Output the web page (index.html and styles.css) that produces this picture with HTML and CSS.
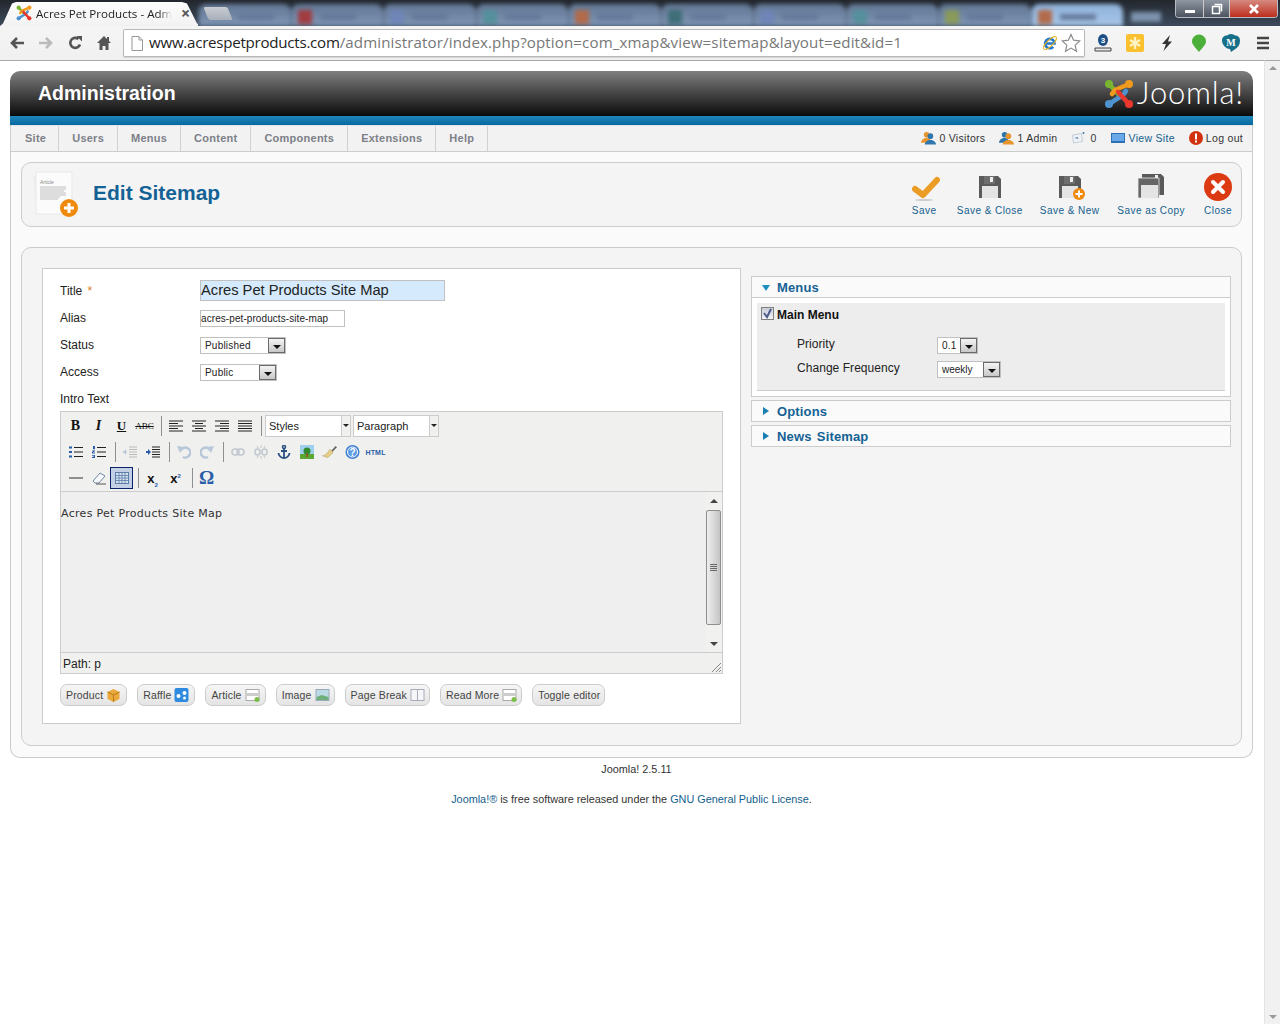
FILE: index.html
```html
<!DOCTYPE html>
<html lang="en">
<head>
<meta charset="utf-8">
<title>Acres Pet Products - Administration</title>
<link rel="stylesheet" href="styles.css">
</head>
<body>
<div class="tabstrip">
  <div class="tab">
    <svg class="favicon" viewBox="0 0 30 30"><g fill="none" stroke-width="4.600" stroke-linecap="round"><path d="M5 5l11 12" stroke="#7ab532"/><path d="M25 5L11 11l-3 4" stroke="#f09a1e"/><path d="M5 25l14-9 3-4" stroke="#4f92d0"/><path d="M25 25L14 13" stroke="#e8382e"/></g><circle cx="5" cy="5" r="4" fill="#7ab532"/><circle cx="25" cy="5" r="4" fill="#f09a1e"/><circle cx="5" cy="25" r="4" fill="#4f92d0"/><circle cx="25" cy="25" r="4" fill="#e8382e"/></svg>
    <span class="tab-title">Acres Pet Products - Adm</span>
    <span class="tab-close">×</span>
  </div>
  <div class="newtab"></div>
  <div class="blurtabs">
    <span class="bt bt-first"><u></u></span><span class="bt"><i class="c1"></i><u></u></span><span class="bt"><i class="c2"></i><u></u></span><span class="bt"><i class="c3"></i><u></u></span><span class="bt"><i class="c4"></i><u></u></span><span class="bt"><i class="c5"></i><u></u></span><span class="bt"><i class="c2"></i><u></u></span><span class="bt"><i class="c3"></i><u></u></span><span class="bt"><i class="c6"></i><u></u></span><span class="bt bt-on"><i class="c4"></i><u></u></span>
    <span class="bt-tail"></span>
  </div>
  <div class="winctl">
    <span class="wbtn wmin"><b></b></span>
    <span class="wbtn wmax"><svg viewBox="0 0 12 12" width="12" height="12"><path d="M3.500 1.500h7v7M1.500 3.500h7v7h-7z" fill="none" stroke="#fff" stroke-width="1.500"/></svg></span>
    <span class="wbtn wclose"><svg viewBox="0 0 12 12" width="12" height="12"><path d="M2 2l8 8M10 2l-8 8" stroke="#fff" stroke-width="2.600"/></svg></span>
  </div>
</div>
<div class="toolbar">
  <svg class="nav" viewBox="0 0 16 16"><path d="M15 8H4M8 3L3 8l5 5" fill="none" stroke="#555" stroke-width="2.600"/></svg>
  <svg class="nav" viewBox="0 0 16 16"><path d="M1 8h11M8 3l5 5-5 5" fill="none" stroke="#bbb" stroke-width="2.600"/></svg>
  <svg class="nav" viewBox="0 0 16 16"><path d="M13 9.500A5 5 0 1 1 11.500 4" fill="none" stroke="#555" stroke-width="2.600"/><path d="M9.500 1h5.500v5.500z" fill="#555"/></svg>
  <svg class="nav" viewBox="0 0 16 16"><path d="M8 1L1 8h2.500v7h3v-4h3v4h3V8H15l-2-2V2h-2v2z" fill="#555"/></svg>
  <div class="omnibox">
    <svg class="pageicon" viewBox="0 0 12 15"><path d="M1 .5h7l3.500 3.500v10.500H1zM8 .5V4h3.500" fill="#fff" stroke="#999"/></svg>
    <span class="url"><span class="host">www.acrespetproducts.com</span>/administrator/index.php?option=com_xmap&amp;view=sitemap&amp;layout=edit&amp;id=1</span>
    <svg class="ie" viewBox="0 0 16 16"><path d="M3.500 8.500h9a4.700 4.700 0 1 0-1.300 3.300" fill="none" stroke="#2277cc" stroke-width="2.600"/><ellipse cx="8" cy="8" rx="8.500" ry="3" transform="rotate(-45 8 8)" fill="none" stroke="#e6b422" stroke-width="1"/></svg>
    <svg class="star" viewBox="0 0 20 20"><path d="M10 1.500l2.600 5.700 6.200.7-4.600 4.200 1.300 6.100L10 15.100l-5.500 3.100 1.300-6.100L1.200 7.900l6.200-.7z" fill="#fff" stroke="#8a8a8a" stroke-width="1.200"/></svg>
  </div>
  <div class="exts">
    <svg viewBox="0 0 18 18"><ellipse cx="9" cy="6" rx="5" ry="6" fill="#1c4f86"/><text x="9" y="9" class="ext-3">3</text><path d="M1 14h16v3H1z" fill="#e8e8e8" stroke="#444"/></svg>
    <svg viewBox="0 0 18 18"><rect x="0" y="0" width="18" height="18" rx="2" fill="#fbc02d"/><path d="M9 3v12M4 6l10 6M14 6L4 12" stroke="#fff3c4" stroke-width="2.400"/></svg>
    <svg viewBox="0 0 18 18"><path d="M12 1L4 10h4l-2.500 7L14 7.500H10z" fill="#333"/></svg>
    <svg viewBox="0 0 18 18"><path d="M9 18C5 13 2 10.500 2 7.500a7 7 0 0 1 14 0C16 10.500 13 13 9 18z" fill="#4caf3a"/></svg>
    <svg viewBox="0 0 18 18"><path d="M9 0c2 0 3 1 4 1.500 3 0 5 2 5 5s-1 6-4 8L9 18l-1-3C3 14.500 0 10 0 6.500 0 3.500 2 1.500 5 1.500 6 1 7 0 9 0z" fill="#17708a"/><text x="9" y="12" class="ext-m">M</text></svg>
    <svg viewBox="0 0 18 18"><path d="M3 4h12M3 9h12M3 14h12" stroke="#444" stroke-width="2.400"/></svg>
  </div>
</div>
<div class="viewport">
  <div class="page">
    <header class="banner">
      <h1 class="brand">Administration</h1>
      <div class="jlogo">
        <svg class="jmark" viewBox="0 0 30 30"><g fill="none" stroke-width="4.600" stroke-linecap="round"><path d="M5 5l11 12" stroke="#7ab532"/><path d="M25 5L11 11l-3 4" stroke="#f09a1e"/><path d="M5 25l14-9 3-4" stroke="#4f92d0"/><path d="M25 25L14 13" stroke="#e8382e"/></g><circle cx="5" cy="5" r="4" fill="#7ab532"/><circle cx="25" cy="5" r="4" fill="#f09a1e"/><circle cx="5" cy="25" r="4" fill="#4f92d0"/><circle cx="25" cy="25" r="4" fill="#e8382e"/></svg>
        <span class="jtext">Joomla!</span>
      </div>
    </header>
    <div class="bluebar"></div>
    <div class="shell">
      <nav class="menubar">
        <ul class="menu">
          <li>Site</li><li>Users</li><li>Menus</li><li>Content</li><li>Components</li><li>Extensions</li><li>Help</li>
        </ul>
        <div class="status">
          <span class="st"><svg viewBox="0 0 16 14"><circle cx="6" cy="3.500" r="3" fill="#e8962c"/><path d="M0 12c0-3 3-5 6-5s5 2 5 5z" fill="#e8962c"/><circle cx="10" cy="5" r="3" fill="#2f76ad"/><path d="M4 14c0-3 3-5 6-5s6 2 6 5z" fill="#2f76ad"/></svg>0 Visitors</span>
          <span class="st"><svg viewBox="0 0 16 14"><circle cx="6" cy="3.500" r="3" fill="#2f76ad"/><path d="M0 12c0-3 3-5 6-5s5 2 5 5z" fill="#2f76ad"/><circle cx="10" cy="5" r="3" fill="#e8962c"/><path d="M4 14c0-3 3-5 6-5s6 2 6 5z" fill="#e8962c"/></svg>1 Admin</span>
          <span class="st st-env"><svg viewBox="0 0 14 14"><path d="M1 4l9-1.500 1 8L2 12z" fill="#eef2f6" stroke="#b8c4d0" stroke-width=".8"/><path d="M3 7l3-1 1 2z" fill="#4b7fa8"/><circle cx="12" cy="2" r="1" fill="#4b7fa8"/></svg>0</span>
          <span class="st st-link"><svg class="wide" viewBox="0 0 14 10"><rect width="14" height="10" fill="#2f6fb5"/><rect x="1" y="1" width="12" height="7" fill="#6aa9e8"/></svg>View Site</span>
          <span class="st st-last"><svg viewBox="0 0 14 14"><circle cx="7" cy="7" r="7" fill="#d2300e"/><rect x="6" y="2.500" width="2" height="6" fill="#fff"/><rect x="6" y="9.500" width="2" height="2" fill="#fff"/></svg>Log out</span>
        </div>
      </nav>
      <section class="titlebox">
        <svg class="titleicon" viewBox="0 0 48 48">
          <path d="M1 5l30-2 2 38-28 1z" fill="#ededed"/>
          <rect x="4" y="1" width="36" height="42" fill="#fbfbfb" stroke="#e9e9e9"/>
          <text x="8" y="13" class="art-label">Article</text>
          <path d="M8 16h26M8 18h26M8 20h24M8 22h26M8 24h26M8 26h20M8 28h18" stroke="#a8a8a8" stroke-width=".7"/>
          <circle cx="37" cy="37" r="9" fill="#f08a0c"/>
          <path d="M37 32v10M32 37h10" stroke="#fff" stroke-width="3"/>
        </svg>
        <h2 class="pagetitle">Edit Sitemap</h2>
        <div class="actions">
          <div class="act act-save"><svg viewBox="1 0 28 28"><path d="M4 16l8 6L26 7" fill="none" stroke="#eb9c25" stroke-width="6" stroke-linecap="round" stroke-linejoin="round"/><ellipse cx="13" cy="27" rx="9" ry="1" fill="#ccc"/></svg><span>Save</span></div>
          <div class="act"><svg viewBox="0 0 30 28"><path d="M4 3h19l3 3v19H4z" fill="#5a5a5a"/><rect x="9" y="3" width="11" height="8" fill="#6e6e6e"/><rect x="15" y="4" width="3" height="5" fill="#eee"/><rect x="7" y="13" width="16" height="12" fill="#e4e4e4"/></svg><span>Save &amp; Close</span></div>
          <div class="act"><svg viewBox="0 0 30 28"><path d="M4 3h19l3 3v19H4z" fill="#5a5a5a"/><rect x="9" y="3" width="11" height="8" fill="#6e6e6e"/><rect x="15" y="4" width="3" height="5" fill="#eee"/><rect x="7" y="13" width="16" height="12" fill="#e4e4e4"/><circle cx="24" cy="21" r="6" fill="#f08a0c"/><path d="M24 17.500v7M20.500 21h7" stroke="#fff" stroke-width="2"/></svg><span>Save &amp; New</span></div>
          <div class="act act-copy"><svg viewBox="0 0 30 28"><path d="M6 1h19l3 3v18H6z" fill="#5a5a5a"/><path d="M2 5h21v20H2z" fill="#666" stroke="#eee" stroke-width=".8"/><rect x="19" y="2" width="3" height="3" fill="#eee"/><rect x="5" y="12" width="17" height="13" fill="#e4e4e4"/></svg><span>Save as Copy</span></div>
          <div class="act act-close"><svg viewBox="1 0 28 28"><circle cx="15" cy="14" r="14" fill="#dc3a12"/><path d="M10 9l10 10M20 9L10 19" stroke="#fff" stroke-width="4" stroke-linecap="round"/></svg><span>Close</span></div>
        </div>
      </section>
      <section class="contentbox">
        <form class="formpanel">
          <div class="row row-title"><label class="lbl">Title <em>*</em></label><span class="in in-title">Acres Pet Products Site Map</span></div>
          <div class="row"><label class="lbl">Alias</label><span class="in in-alias">acres-pet-products-site-map</span></div>
          <div class="row"><label class="lbl">Status</label><span class="sel sel-status">Published<b class="arrow"></b></span></div>
          <div class="row"><label class="lbl">Access</label><span class="sel sel-access">Public<b class="arrow"></b></span></div>
          <div class="row row-intro"><label class="lbl">Intro Text</label></div>
          <div class="editor">
            <div class="edtools">
              <div class="edrow">
                <span class="eb t-b">B</span><span class="eb t-i">I</span><span class="eb t-u">U</span><span class="eb t-s">ABC</span><i class="sep"></i>
                <span class="eb"><svg viewBox="0 0 14 12"><path d="M0 1h14M0 3.500h9M0 6h14M0 8.500h9M0 11h14"/></svg></span>
                <span class="eb"><svg viewBox="0 0 14 12"><path d="M0 1h14M3 3.500h8M0 6h14M3 8.500h8M0 11h14"/></svg></span>
                <span class="eb"><svg viewBox="0 0 14 12"><path d="M0 1h14M5 3.500h9M0 6h14M5 8.500h9M0 11h14"/></svg></span>
                <span class="eb"><svg viewBox="0 0 14 12"><path d="M0 1h14M0 3.500h14M0 6h14M0 8.500h14M0 11h14"/></svg></span><i class="sep"></i>
                <span class="ddl ddl-1"><span>Styles</span><b></b></span><span class="ddl ddl-2"><span>Paragraph</span><b></b></span>
              </div>
              <div class="edrow">
                <span class="eb"><svg viewBox="0 0 14 12"><path d="M5 1.500h9M5 6h9M5 10.500h9"/><path d="M0 .5h3v2H0zM0 5h3v2H0zM0 9.500h3v2H0z" class="bl"/></svg></span>
                <span class="eb"><svg viewBox="0 0 14 12"><path d="M5 1.500h9M5 6h9M5 10.500h9"/><path d="M1 0h2v3.200H1zM0 4.500h3v1H1v1h2v1H0v-1.500h2v-.5H0zM0 9h3v3H0v-1h2v-.4H1v-.6h1v-.2H0z" class="bl"/></svg></span><i class="sep"></i>
                <span class="eb"><svg class="off" viewBox="0 0 14 12"><path d="M6 1h8M6 3.500h8M6 6h8M6 8.500h8M6 11h8M0 6h4"/><path d="M0 6l3-3v6z" class="bl-f"/></svg></span>
                <span class="eb"><svg viewBox="0 0 14 12"><path d="M6 1h8M6 3.500h8M6 6h8M6 8.500h8M6 11h8"/><path d="M0 5h2V3l3 3-3 3V7H0z" class="bl"/></svg></span><i class="sep"></i>
                <span class="eb"><svg class="faint" viewBox="0 0 14 14"><path d="M4 5a5 5 0 1 1 2 7" fill="none" stroke-width="2.500"/><path d="M0 1l7 1-4 6z" class="bl-f"/></svg></span>
                <span class="eb"><svg class="faint" viewBox="0 0 14 14"><path d="M10 5a5 5 0 1 0-2 7" fill="none" stroke-width="2.500"/><path d="M14 1L7 2l4 6z" class="bl-f"/></svg></span><i class="sep"></i>
                <span class="eb"><svg class="grey" viewBox="0 0 14 10"><rect x="1" y="2" width="7" height="6" rx="3" fill="none" stroke-width="1.500"/><rect x="6" y="2" width="7" height="6" rx="3" fill="none" stroke-width="1.500"/></svg></span>
                <span class="eb"><svg class="grey big" viewBox="0 0 14 14"><rect x="1" y="4" width="5" height="6" rx="2.500" fill="none" stroke-width="1.500"/><rect x="8" y="4" width="5" height="6" rx="2.500" fill="none" stroke-width="1.500"/><path d="M7 0v3M7 11v3M3 1l1 2M11 1l-1 2M3 13l1-2M11 13l-1-2" stroke-width="1"/></svg></span>
                <span class="eb"><svg class="anchor big" viewBox="0 0 14 14"><circle cx="7" cy="2" r="1.500" fill="none" stroke-width="1.500"/><path d="M7 3.500V13M4 6h6M1.500 8c0 3 3 5 5.500 5s5.500-2 5.500-5" fill="none" stroke-width="1.800"/></svg></span>
                <span class="eb"><svg class="big" viewBox="0 0 14 14"><rect width="14" height="14" fill="#9ed0ee" stroke="none"/><rect y="9" width="14" height="5" fill="#5aa832" stroke="none"/><circle cx="7" cy="6" r="3.500" fill="#2f8a2f" stroke="none"/><rect x="6" y="8" width="2" height="4" fill="#8a5a2a" stroke="none"/></svg></span>
                <span class="eb"><svg class="big wide15" viewBox="0 0 16 14"><path d="M10 5.500l4.500-5 1.500 1.500-5 5z" fill="#666" stroke="none"/><path d="M8.500 4l3.500 3.500L6 13 .5 11c3.500 0 5.500-3.500 8-7z" fill="#e6cf85" stroke="#a89355" stroke-width=".5"/></svg></span>
                <span class="eb"><svg class="big wide15" viewBox="0 0 14 14"><circle cx="7" cy="7" r="7" fill="#3f7fd0" stroke="none"/><circle cx="7" cy="7" r="5" fill="#5a9ae6" stroke="#fff"/><text x="7" y="10.500" class="qm">?</text></svg></span>
                <span class="eb eb-html">HTML</span>
              </div>
              <div class="edrow">
                <span class="eb"><svg viewBox="0 0 16 4"><path d="M0 2h16" stroke="#111"/></svg></span>
                <span class="eb"><svg class="big" viewBox="0 0 14 14"><path d="M1 10l7-8 5 3-6 7H3z" fill="#f6f8fb" stroke="#7289a8"/><path d="M4 13h10" stroke="#555"/></svg></span>
                <span class="eb eb-on"><svg viewBox="0 0 14 12"><rect x=".5" y=".5" width="13" height="11" fill="#d7e2f0" stroke="#5c7ea8"/><path d="M.5 3.500h13M.5 6h13M.5 8.500h13M4 .5v11M7 .5v11M10 .5v11" stroke="#5c7ea8" stroke-width=".8"/></svg></span><i class="sep"></i>
                <span class="eb t-x"><span>x<sub>2</sub></span></span>
                <span class="eb t-x"><span>x<sup>2</sup></span></span><i class="sep"></i>
                <span class="eb t-o">Ω</span>
              </div>
            </div>
            <div class="edbody">
              <div class="edtext">Acres Pet Products Site Map</div>
              <div class="edscroll">
                <b class="sb-up"></b>
                <div class="thumb"><i></i><i></i><i></i><i></i></div>
                <b class="sb-dn"></b>
              </div>
            </div>
            <div class="edpath">Path: p
              <svg class="grip" viewBox="0 0 11 11"><path d="M10 1L1 10M10 5l-5 5M10 8l-2 2" stroke="#888"/></svg>
            </div>
          </div>
          <div class="xbuttons">
            <span class="xb">Product<svg viewBox="0 0 14 14"><path d="M7 1l6 3v7l-6 3-6-3V4z" fill="#eaa93a"/><path d="M1 4l6 3 6-3M7 7v7" fill="none" stroke="#b97a18"/></svg></span>
            <span class="xb">Raffle<svg viewBox="0 0 14 14"><rect width="14" height="14" rx="2" fill="#2e8be0"/><circle cx="4" cy="8" r="2" fill="#fff"/><circle cx="10" cy="5" r="2" fill="#fff"/><circle cx="10" cy="10" r="1.500" fill="#fff"/></svg></span>
            <span class="xb">Article<svg viewBox="0 0 14 14"><rect x=".5" y="1.500" width="13" height="11" fill="#fff" stroke="#aaa"/><path d="M1 6.500h12" stroke="#ccc" stroke-width="3"/><circle cx="11.500" cy="11.500" r="2.500" fill="#7cc04a"/></svg></span>
            <span class="xb">Image<svg viewBox="0 0 14 14"><rect x=".5" y="1.500" width="13" height="11" fill="#bcd9e6" stroke="#9ab"/><path d="M1 9l5-2 7 2v3H1z" fill="#6fb07a"/></svg></span>
            <span class="xb">Page Break<svg viewBox="0 0 14 14"><rect x=".5" y="1.500" width="13" height="11" fill="#f4f6f8" stroke="#aab"/><path d="M7 2v10" stroke="#aab"/></svg></span>
            <span class="xb">Read More<svg viewBox="0 0 14 14"><rect x=".5" y="1.500" width="13" height="11" fill="#fff" stroke="#aaa"/><path d="M1 6.500h12" stroke="#ccc" stroke-width="3"/><circle cx="11.500" cy="11.500" r="2.500" fill="#7cc04a"/></svg></span>
            <span class="xb">Toggle editor</span>
          </div>
        </form>
        <aside class="side">
          <div class="pane">
            <h3 class="panehead"><b class="tri tri-down"></b>Menus</h3>
            <div class="panebody">
              <div class="menuitem">
                <div class="mi-head"><span class="cbx"><svg viewBox="0 0 11 11"><path d="M2 5l3 4 4-8" fill="none" stroke="#4a5a8a" stroke-width="2"/></svg></span><strong>Main Menu</strong></div>
                <div class="mi-row"><span class="mi-lbl">Priority</span><span class="sel sel-pri">0.1<b class="arrow"></b></span></div>
                <div class="mi-row"><span class="mi-lbl">Change Frequency</span><span class="sel sel-freq">weekly<b class="arrow"></b></span></div>
              </div>
            </div>
          </div>
          <div class="pane"><h3 class="panehead"><b class="tri"></b>Options</h3></div>
          <div class="pane"><h3 class="panehead"><b class="tri"></b>News Sitemap</h3></div>
        </aside>
      </section>
    </div>
    <footer class="foot">
      <p class="ver">Joomla! 2.5.11</p>
      <p class="lic"><a>Joomla!®</a> is free software released under the <a>GNU General Public License</a>.</p>
    </footer>
  </div>
  <div class="pagescroll"><b class="ps-up"></b><b class="ps-dn"></b></div>
</div>
</body>
</html>
```
FILE: styles.css
```css
* { box-sizing: border-box; }
html, body { margin: 0; padding: 0; }
body { width: 1280px; height: 1024px; overflow: hidden; background: #fff; font-family: "Liberation Sans", Arial, sans-serif; font-size: 12px; color: #333; display: flex; flex-direction: column; position: relative; }
svg { display: block; flex: none; }

/* browser chrome */
.tabstrip { height: 26px; display: flex; background: linear-gradient(#23272d, #3c4a5c); overflow: hidden; }
.tab { width: 198px; flex: none; margin-top: 2px; padding: 0 0 2px 16px; display: flex; align-items: center; background: linear-gradient(#fdfdfd, #f2f2f2); clip-path: polygon(0 100%, 3px 90%, 12px 6%, 16px 0, 182px 0, 187px 6%, 197px 90%, 204px 100%); font-family: "Open Sans", sans-serif; position: relative; z-index: 1; }
.favicon { width: 16px; height: 16px; margin-right: 4px; }
.tab-title { flex: none; font-size: 11.600px; color: #222; white-space: nowrap; overflow: hidden; width: 136px; -webkit-mask-image: linear-gradient(90deg, #000 90%, transparent); mask-image: linear-gradient(90deg, #000 90%, transparent); }
.tab-close { font-size: 16px; color: #555; font-weight: 700; margin-left: 9px; }
.newtab { position: absolute; left: 206px; top: 7px; width: 24px; height: 13px; background: linear-gradient(#c8ccd2, #a9b0ba); transform: skewX(22deg); border-radius: 2px; z-index: 1; }
.blurtabs { flex: 1; display: flex; filter: blur(2.2px); padding-top: 4px; }
.bt { width: 92.500px; flex: none; background: linear-gradient(#627693, #7f96b5); padding: 4px 0 0 7px; border-radius: 8px 8px 0 0; display: flex; gap: 8px; align-items: center; box-shadow: inset 1px 0 0 #49596e; }
.bt-first { padding-left: 40px; }
.bt-on { background: linear-gradient(#8fb2da, #a8c6e8); }
.bt i { display: block; width: 14px; height: 14px; }
.bt u { display: block; width: 36px; height: 6px; background: #65799a; text-decoration: none; }
.bt-tail { width: 30px; height: 10px; margin: 8px 0 0 8px; background: #7d93ad; }
.c1 { background: #a23c40; }
.c2 { background: #6f85b8; }
.c3 { background: #55909c; }
.c4 { background: #b26a4a; }
.c5 { background: #3e6e78; }
.c6 { background: #8a9a5a; }
.winctl { position: absolute; right: 2px; top: 0; display: flex; height: 18px; border: 1px solid #b8bcc2; border-top: 0; border-radius: 0 0 4px 4px; overflow: hidden; }
.wbtn { display: flex; align-items: center; justify-content: center; }
.wmin { width: 27px; background: linear-gradient(#8e97a2, #4c5460); }
.wmin b { width: 10px; height: 3px; background: #fff; margin-top: 5px; }
.wmax { width: 26px; background: linear-gradient(#8e97a2, #4c5460); border-left: 1px solid #ccc; }
.wclose { width: 48px; background: linear-gradient(#d68a80, #bd2d1d); border-left: 1px solid #ccc; }
.toolbar { height: 34px; padding: 3px 0 3px 9px; display: flex; align-items: center; background: linear-gradient(#f5f5f5, #f0f0f0); }
.nav { width: 16px; height: 16px; margin-right: 13px; }
.nav:nth-child(4) { margin-right: 11px; }
.omnibox { width: 962px; height: 28px; padding: 0 3px 0 7px; display: flex; align-items: center; background: #fff; border: 1px solid #b9b9b9; border-radius: 2px; box-shadow: 0 1px 1px rgba(0,0,0,.12); }
.pageicon { width: 12px; height: 15px; margin-right: 6px; }
.url { flex: 1; font-family: "Open Sans", sans-serif; font-size: 15.100px; line-height: 24px; margin-bottom: 2px; color: #777; white-space: nowrap; overflow: hidden; letter-spacing: .12px; }
.host { color: #222; letter-spacing: -.25px; }
.ie { width: 16px; height: 16px; margin-right: 3px; }
.star { width: 20px; height: 20px; }
.exts { display: flex; align-items: center; margin-left: 9px; gap: 14px; }
.exts svg { width: 18px; height: 18px; }
.ext-m { font: 700 10px "Liberation Serif", serif; fill: #fff; text-anchor: middle; }
.ext-3 { font: 700 8px "Liberation Sans", sans-serif; fill: #fff; text-anchor: middle; }

/* page */
.viewport { flex: 1; display: flex; min-height: 0; }
.page { flex: 1; border-top: 1px solid #a9a9a9; padding: 10px 11px 0 10px; min-width: 0; }
.pagescroll { width: 16px; position: relative; background: #f1f1f1; border-left: 1px solid #e4e4e4; border-top: 1px solid #a9a9a9; }
.ps-up, .ps-dn { position: absolute; left: 4px; width: 0; height: 0; border-left: 4px solid transparent; border-right: 4px solid transparent; }
.ps-up { top: 5px; border-bottom: 4px solid #9a9a9a; }
.ps-dn { bottom: 5px; border-top: 4px solid #9a9a9a; }
.banner { height: 45px; padding: 0 10px 0 28px; display: flex; align-items: center; justify-content: space-between; border-radius: 10px 10px 0 0; background: linear-gradient(#7f7f7f, #0a0a0a); }
.brand { margin: 0; font-size: 19.500px; font-weight: 700; color: #fff; line-height: 45px; }
.jlogo { display: flex; align-items: center; gap: 3px; }
.jmark { width: 30px; height: 30px; }
.jtext { font-family: Lato, "Open Sans", sans-serif; font-weight: 300; font-size: 31px; line-height: 30px; color: #fff; letter-spacing: .8px; margin: 0 -1px 3px 0; }
.bluebar { height: 9px; background: linear-gradient(#1f86bb, #07689f); }
.shell { border: 1px solid #ccc; border-top: 0; border-radius: 0 0 10px 10px; background: #fafafa; padding-bottom: 11px; }
.menubar { height: 27px; display: flex; justify-content: space-between; align-items: stretch; background: #f2f2f2; border-bottom: 1px solid #ccc; border-top: 1px solid #e4e4e4; }
.menu { margin: 0; padding: 0; list-style: none; display: flex; }
.menu li { padding: 0 13px; line-height: 25px; font-size: 11px; font-weight: 700; color: #7c8088; border-right: 1px solid #d0d0d0; letter-spacing: .25px; }
.menu li:first-child { padding: 0 12px 0 14px; }
.status { display: flex; align-items: center; padding: 0 9px 2px 0; font-size: 10.500px; letter-spacing: .3px; color: #333; }
.st { display: flex; align-items: center; margin-left: 14px; gap: 3px; }
.st svg { width: 15px; height: 14px; }
.st-env { gap: 4px; }
.st-link { color: #14618e; }
.st-link svg.wide { width: 14px; height: 10px; margin-right: 1px; }
.st-last svg { width: 14px; }
.titlebox { height: 65px; margin: 10px 10px 0; padding: 0 9px 0 10px; display: flex; align-items: center; border: 1px solid #ccc; border-radius: 10px; background: #f4f4f4; }
.titleicon { width: 48px; height: 48px; margin-right: 13px; }
.art-label { font: 5px "Liberation Sans", sans-serif; fill: #888; }
.pagetitle { margin: 0 0 4px; font-size: 21px; font-weight: 700; color: #146295; }
.actions { margin-left: auto; display: flex; gap: 17px; }
.act { display: flex; flex-direction: column; align-items: center; font-size: 10px; color: #14618e; letter-spacing: .45px; }
.act svg { width: 30px; height: 28px; margin-bottom: 4px; }
.act-save { align-items: flex-start; }
.act-save svg, .act-close svg { width: 28px; }
.act-copy { margin-left: 1px; }
.act-close { margin-left: 2px; }
.contentbox { margin: 20px 10px 0; padding: 20px 10px 20px 20px; height: 499px; display: flex; gap: 10px; border: 1px solid #ccc; border-radius: 10px; background: #f4f4f4; }
.formpanel { width: 699px; height: 456px; padding: 8px 17px; background: #fff; border: 1px solid #ccc; flex: none; }
.row { display: flex; height: 27px; align-items: center; }
.row-title { height: 27px; }
.row-intro { height: 27px; margin-bottom: -1px; }
.lbl { width: 140px; font-size: 12px; color: #222; }
.lbl em { color: #e07b20; font-style: normal; margin-left: 2px; }
.in { display: block; border: 1px solid #c0c0c0; white-space: nowrap; background: #fff; color: #222; }
.in-title { width: 245px; height: 21px; font-size: 14.700px; line-height: 19px; background: #d5eafc; padding-left: 0; }
.in-alias { width: 145px; height: 17px; font-size: 10px; line-height: 15px; padding-left: 0; margin-top: 2px; letter-spacing: .08px; }
.sel { position: relative; display: block; height: 17px; border: 1px solid #c0c0c0; background: #fff; color: #222; font-size: 10px; line-height: 15px; padding-left: 4px; letter-spacing: .2px; margin-top: 2px; }
.sel-status { width: 86px; }
.sel-access { width: 77px; }
.sel-pri { width: 41px; height: 17px; }
.sel-freq { width: 64px; height: 17px; letter-spacing: 0; }
.arrow { position: absolute; right: 0; top: 0; width: 17px; height: 15px; background: linear-gradient(#f4f4f4, #c8c8c8); border: 1px solid #6a6a6a; }
.arrow::after { content: ""; position: absolute; left: 4px; top: 6px; border-left: 4px solid transparent; border-right: 4px solid transparent; border-top: 4px solid #111; }

/* editor */
.editor { width: 663px; height: 263px; margin-top: 0; border: 1px solid #ccc; background: #f0f0ee; display: flex; flex-direction: column; }
.edtools { height: 80px; padding: 1px 0 0 3px; border-bottom: 1px solid #ccc; flex: none; }
.edrow { height: 26px; display: flex; align-items: center; }
.eb { width: 23px; height: 22px; display: flex; align-items: center; justify-content: center; color: #111; flex: none; }
.eb svg { width: 14px; height: 12px; stroke: #222; fill: none; }
.eb svg.big { height: 14px; }
.eb svg.wide15 { width: 15px; }
.eb svg .bl { fill: #2a5da8; stroke: none; }
.eb svg .bl-f { fill: #b9c9dc; stroke: none; }
.eb svg.off { stroke: #bbb; }
.eb svg.faint { stroke: #b6c6d8; height: 14px; }
.eb svg.grey { stroke: #c2c8cf; }
.eb svg.anchor { stroke: #2a4f80; }
.sep { width: 8px; height: 20px; flex: none; position: relative; }
.sep::after { content: ""; position: absolute; left: 5px; top: 0; bottom: 0; width: 1px; background: #8f8f8f; }
.eb-on { border: 1px solid #0a246a; background: #c2cfe5; }
.t-b, .t-i, .t-u { font-family: "Liberation Serif", serif; font-size: 14px; font-weight: 700; }
.t-i { font-style: italic; }
.t-u { text-decoration: underline; font-size: 13px; }
.t-s { font-family: "Liberation Serif", serif; font-size: 9px; text-decoration: line-through; }
.t-x { font-family: "Liberation Sans", sans-serif; font-size: 13px; font-weight: 700; }
.t-x sub, .t-x sup { font-size: 6px; color: #2a5da8; line-height: 0; }
.t-o { font-family: "Liberation Serif", serif; font-size: 19px; font-weight: 700; color: #2a5da8; }
.eb-html { font-size: 7px; font-weight: 700; color: #2a5da8; letter-spacing: .2px; }
.qm { font: 700 10px "Liberation Sans", sans-serif; fill: #fff; stroke: none; text-anchor: middle; }
.ddl { height: 22px; display: flex; border: 1px solid #ccc; background: #fff; font-size: 11px; color: #222; line-height: 20px; flex: none; }
.ddl span { flex: 1; padding-left: 3px; }
.ddl b { width: 9px; background: #f0f0ee; border-left: 1px solid #ccc; position: relative; }
.ddl b::after { content: ""; position: absolute; left: 1px; top: 8px; border-left: 3px solid transparent; border-right: 3px solid transparent; border-top: 3px solid #222; }
.ddl-1 { width: 86px; margin-left: 1px; }
.ddl-2 { width: 86px; margin-left: 2px; }
.edbody { flex: 1; display: flex; min-height: 0; background: #efefef; }
.edtext { flex: 1; padding: 15px 0 0 0; font-family: "DejaVu Sans", Verdana, sans-serif; font-size: 11px; color: #333; letter-spacing: .3px; }
.edscroll { width: 16px; position: relative; background: #f1f1ef; padding-top: 18px; }
.sb-up, .sb-dn { position: absolute; left: 4px; width: 0; height: 0; border-left: 4px solid transparent; border-right: 4px solid transparent; }
.sb-up { top: 7px; border-bottom: 4px solid #444; }
.sb-dn { bottom: 6px; border-top: 4px solid #444; }
.thumb { height: 115px; margin: 0 1px 0 0; display: flex; flex-direction: column; justify-content: center; align-items: center; gap: 1px; background: linear-gradient(90deg, #eee, #c4c4c4); border: 1px solid #8e8e8e; border-radius: 2px; }
.thumb i { width: 7px; height: 1px; background: #666; }
.edpath { height: 21px; flex: none; padding: 1px 0 0 2px; line-height: 20px; font-size: 12px; color: #222; border-top: 1px solid #ccc; position: relative; }
.grip { position: absolute; right: 0; bottom: 0; width: 11px; height: 11px; }
.xbuttons { display: flex; margin-top: 10px; gap: 10px; }
.xb { height: 22px; padding: 0 4px 0 5px; display: flex; align-items: center; gap: 3px; font-size: 10.500px; letter-spacing: .15px; color: #444; background: linear-gradient(#f6f6f6, #e4e4e4); border: 1px solid #ccc; border-radius: 7px; white-space: nowrap; }
.xb:nth-child(-n+3) { padding-right: 5px; }
.xb svg { width: 15px; height: 14px; }

/* side */
.side { width: 480px; flex: none; padding-top: 8px; display: flex; flex-direction: column; gap: 3px; }
.pane { border: 1px solid #ccc; background: #fafafa; }
.panehead { margin: 0; height: 20px; display: flex; align-items: center; padding-left: 25px; font-size: 13px; font-weight: 700; color: #146295; position: relative; letter-spacing: .15px; word-spacing: 1.500px; }
.tri { position: absolute; left: 11px; top: 6px; border-top: 4px solid transparent; border-bottom: 4px solid transparent; border-left: 6px solid #1a7fb2; }
.tri-down { left: 10px; top: 8px; border: 0 solid transparent; border-left-width: 4px; border-right-width: 4px; border-top: 6px solid #1a8fc0; }
.panebody { background: #fff; border-top: 1px solid #ccc; padding: 5px; }
.menuitem { height: 88px; background: #ededed; border-bottom: 1px solid #ccc; padding: 3px 4px; }
.mi-head { display: flex; align-items: center; gap: 3px; font-size: 12px; color: #111; height: 17px; margin-bottom: 9px; }
.cbx { width: 13px; height: 13px; border: 1px solid #808080; background: linear-gradient(#c8ccd8, #f4f4f8); margin-bottom: 3px; }
.mi-row { display: flex; height: 24px; align-items: center; padding-left: 36px; }
.mi-lbl { width: 140px; font-size: 12px; color: #222; letter-spacing: .05px; }
.foot { text-align: center; font-size: 10.850px; color: #333; padding-top: 5px; }
.foot p { margin: 0; line-height: 13px; }
.foot .ver { padding-left: 10px; }
.foot .lic { margin-top: 17px; }
.foot a { color: #14618e; }
```
